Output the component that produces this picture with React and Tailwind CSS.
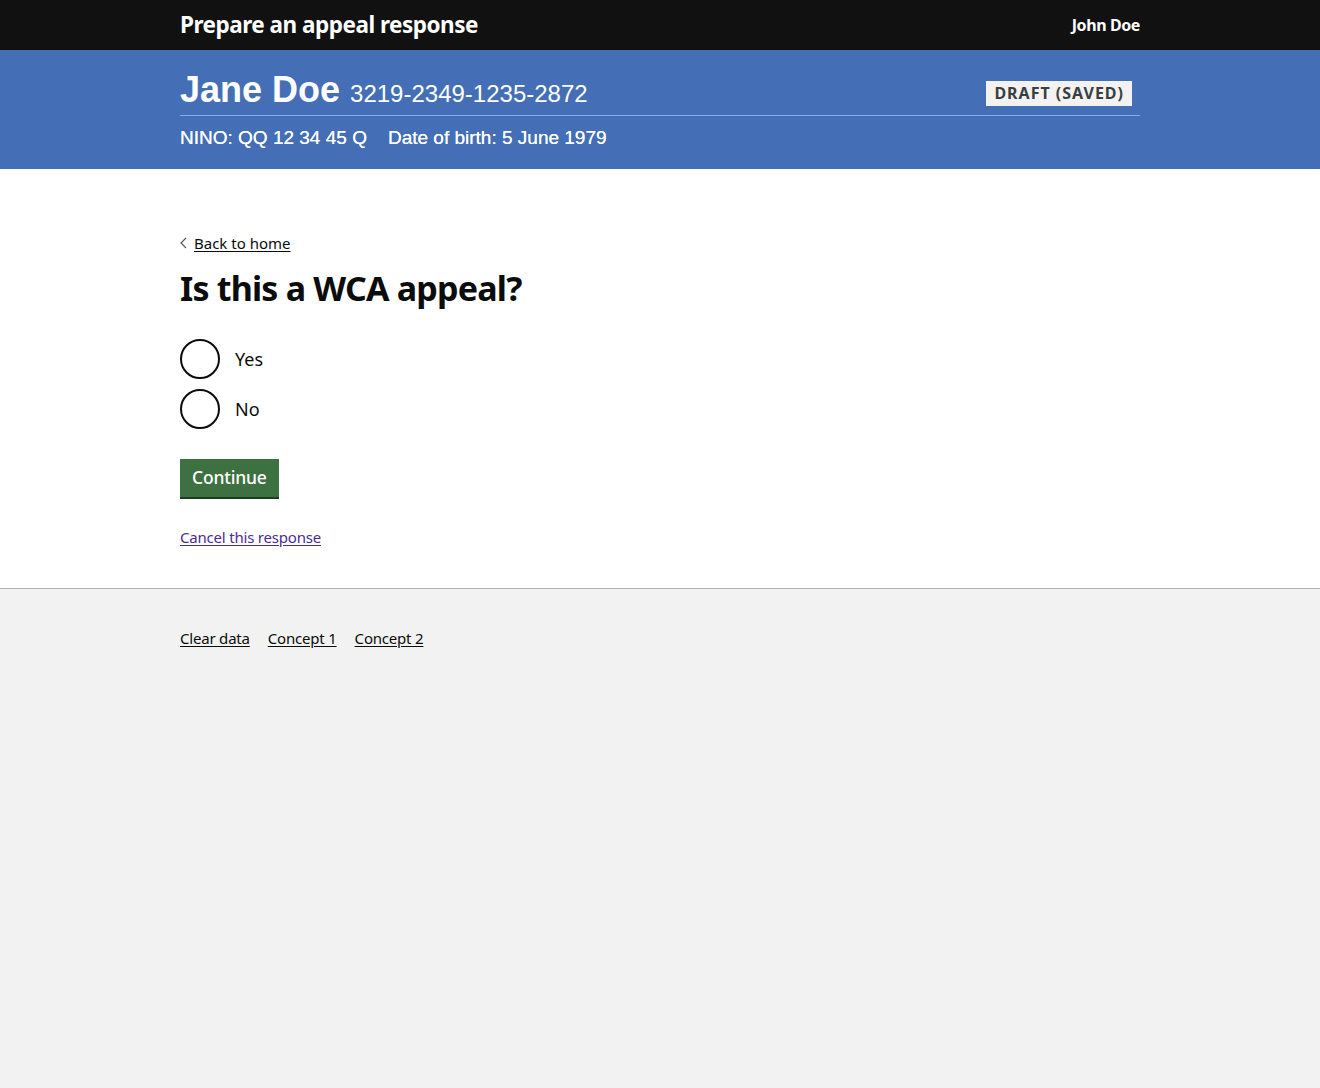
export default function App() {
  const sans = { fontFamily: '"Noto Sans", "Liberation Sans", Arial, sans-serif' }
  return (
    <div className="min-h-[1088px] flex flex-col bg-[#f2f2f2]" style={sans}>
      {/* ── Service header ───────────────────────────── */}
      <header className="bg-[#111111] h-[50px]">
        <div className="w-[960px] mx-auto h-full flex items-center justify-between">
          <span className="text-white font-bold text-[22.5px] tracking-[-0.5px] leading-none">
            Prepare an appeal response
          </span>
          <span className="text-white font-bold text-[16px] tracking-[-0.4px] leading-none">John Doe</span>
        </div>
      </header>

      {/* ── Claimant banner ──────────────────────────── */}
      <div className="bg-[#446fb6] h-[119px]" style={{ fontFamily: '"Liberation Sans", Arial, sans-serif' }}>
        <div className="w-[960px] mx-auto pt-[21px]">
          <div className="flex items-center justify-between border-b border-[#8aaae6] pb-[3px]">
            <div className="flex items-baseline gap-[10px] text-white">
              <span className="text-[36px] font-bold leading-[38px]">Jane Doe</span>
              <span className="text-[24px]">3219-2349-1235-2872</span>
            </div>
            <span
              className="mr-[8px] mt-[3px] bg-[#f3f2f1] text-[#383f43] font-bold text-[16px] tracking-[1px] leading-[25px] px-[8px]"
              style={sans}
            >
              DRAFT (SAVED)
            </span>
          </div>
          <div className="text-white text-[19px] pt-[8px] flex gap-[21px] [text-shadow:0_0_0.4px_white]">
            <span>NINO: QQ 12 34 45 Q</span>
            <span>Date of birth: 5 June 1979</span>
          </div>
        </div>
      </div>

      {/* ── Main ─────────────────────────────────────── */}
      <main className="bg-white border-b border-[#b1b4b6] h-[420px]">
        <div className="w-[960px] mx-auto pt-[62px]">
          <a href="#" className="inline-flex items-center gap-[6px] text-[#0b0c0c] text-[15px] leading-[20px]">
            <svg width="8" height="12" viewBox="0 0 8 12" fill="none" stroke="#505a5f" strokeWidth="1.2">
              <path d="M6 1 1 6l5 5" />
            </svg>
            <span className="underline underline-offset-2">Back to home</span>
          </a>
          <h1 className="text-[#0b0c0c] font-bold text-[34px] tracking-[-0.8px] leading-[40px] mt-[13px]">
            Is this a WCA appeal?
          </h1>
          <div className="mt-[31px] flex flex-col gap-[10px]">
            {['Yes', 'No'].map((l) => (
              <label key={l} className="flex items-center gap-[15px] text-[18px] text-[#0b0c0c]">
                <span className="w-[40px] h-[40px] rounded-full border-2 border-[#0b0c0c] bg-white" />
                {l}
              </label>
            ))}
          </div>
          <button className="mt-[30px] bg-[#3e7142] text-white text-[17.5px] font-medium h-[38px] px-[12px] shadow-[0_2px_0_#1e3a21] leading-none tracking-[-0.2px]">
            Continue
          </button>
          <div className="mt-[28px]">
            <a href="#" className="text-[#4c2c92] text-[15px] underline underline-offset-2 tracking-[-0.2px]">
              Cancel this response
            </a>
          </div>
        </div>
      </main>

      {/* ── Footer ───────────────────────────────────── */}
      <footer className="flex-1">
        <div className="w-[960px] mx-auto pt-[38px] flex gap-[18px] text-[15px] text-[#0b0c0c] tracking-[-0.2px]">
          <a href="#" className="underline underline-offset-2">Clear data</a>
          <a href="#" className="underline underline-offset-2">Concept 1</a>
          <a href="#" className="underline underline-offset-2">Concept 2</a>
        </div>
      </footer>
    </div>
  )
}
